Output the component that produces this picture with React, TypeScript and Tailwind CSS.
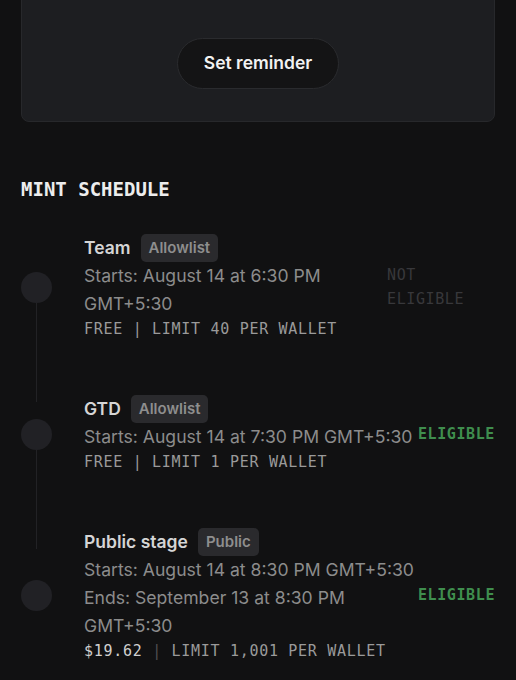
import React from "react";

const sans = { fontFamily: "Inter, 'Noto Sans', sans-serif" };
const mono = { fontFamily: "'DejaVu Sans Mono', 'Liberation Mono', monospace" };

function Dot({ line }: { line: boolean }) {
  return (
    <div className="relative w-[63px] shrink-0">
      <div className="h-[31px] w-[31px] rounded-full bg-[#212125]" />
      {line && <div className="absolute left-[15px] top-full h-[99px] w-px bg-[#222225]" />}
    </div>
  );
}

function Title({ name, badge }: { name: string; badge: string }) {
  return (
    <div className="flex items-center gap-[10px]">
      <span className="text-[17.5px] font-semibold leading-[28px] text-[#d5d5d5]">{name}</span>
      <span className="flex h-[28px] items-center rounded-[5px] bg-[#2a2a2d] px-[8px] text-[15px] font-semibold text-[#8e8e8e]">
        {badge}
      </span>
    </div>
  );
}

export default function App() {
  return (
    <div className="min-h-screen bg-[#111112] px-[21px] pb-10" style={sans}>
      <div className="-mt-4 flex h-[138px] justify-center rounded-lg border border-[#27282b] bg-[#1d1e21] pt-[53px]">
        <button className="h-[51px] w-[162px] rounded-full border border-[#2a2b2e] bg-[#141415] text-[17.5px] font-semibold text-[#f2f2f2]">
          Set reminder
        </button>
      </div>

      <h2 className="mt-[55px] text-[19px] font-bold leading-[24px] text-[#ededed]" style={mono}>
        MINT SCHEDULE
      </h2>

      <div className="mt-[33px] flex flex-col gap-[55px]">
        {/* Row 1 */}
        <div className="flex items-center">
          <Dot line />
          <div className="flex flex-1 items-center justify-between gap-[4px]">
            <div className="min-w-0 flex-1">
              <Title name="Team" badge="Allowlist" />
              <div className="text-[17.6px] leading-[28px] text-[#8c8c8c]">Starts: August 14 at 6:30 PM GMT+5:30</div>
              <div className="text-[15px] leading-[22px] tracking-[0.7px] text-[#9a9a9a]" style={mono}>
                FREE | LIMIT 40 PER WALLET
              </div>
            </div>
            <div className="w-[108px] shrink-0 text-[15px] leading-[24px] tracking-[0.6px] text-[#38383b]" style={mono}>
              NOT ELIGIBLE
            </div>
          </div>
        </div>

        {/* Row 2 */}
        <div className="flex items-center">
          <Dot line />
          <div className="flex flex-1 items-center justify-between gap-[4px]">
            <div className="min-w-0 flex-1">
              <Title name="GTD" badge="Allowlist" />
              <div className="whitespace-nowrap text-[17.6px] leading-[28px] text-[#8c8c8c]">Starts: August 14 at 7:30 PM GMT+5:30</div>
              <div className="text-[15px] leading-[22px] tracking-[0.7px] text-[#9a9a9a]" style={mono}>
                FREE | LIMIT 1 PER WALLET
              </div>
            </div>
            <div className="shrink-0 text-[15px] font-bold leading-[24px] tracking-[0.6px] text-[#3f8e4e]" style={mono}>
              ELIGIBLE
            </div>
          </div>
        </div>

        {/* Row 3 */}
        <div className="flex items-center">
          <Dot line={false} />
          <div className="flex flex-1 items-center justify-between gap-[4px]">
            <div className="min-w-0 flex-1">
              <Title name="Public stage" badge="Public" />
              <div className="whitespace-nowrap text-[17.6px] leading-[28px] text-[#8c8c8c]">Starts: August 14 at 8:30 PM GMT+5:30</div>
              <div className="text-[17.6px] leading-[28px] text-[#8c8c8c]">Ends: September 13 at 8:30 PM GMT+5:30</div>
              <div className="text-[15px] leading-[22px] tracking-[0.7px] text-[#9a9a9a]" style={mono}>
                <span className="text-[#cfcfcf]">$19.62</span> <span className="text-[#505052]">|</span> LIMIT 1,001 PER WALLET
              </div>
            </div>
            <div className="shrink-0 text-[15px] font-bold leading-[24px] tracking-[0.6px] text-[#3f8e4e]" style={mono}>
              ELIGIBLE
            </div>
          </div>
        </div>
      </div>
    </div>
  );
}
